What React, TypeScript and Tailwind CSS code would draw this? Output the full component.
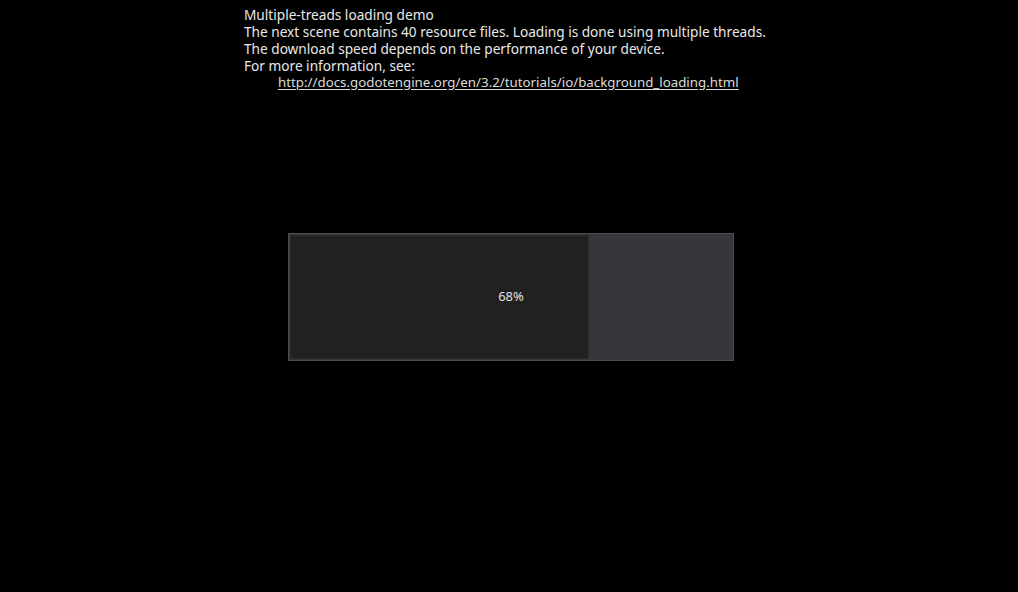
import React from 'react';

const App: React.FC = () => {
  const progress = 68;
  // inner track is 440px wide
  const fillWidth = Math.round((progress / 100) * 440);

  return (
    <div className="w-[1018px] h-[592px] bg-black overflow-hidden" style={{ fontFamily: '"Noto Sans", "Open Sans", sans-serif' }}>
      {/* Info label */}
      <div className="pl-[244px] pt-[6px] text-[13.65px] leading-[17px] text-[#e8e8e8]">
        <div>Multiple-treads loading demo</div>
        <div>The next scene contains 40 resource files. Loading is done using multiple threads.</div>
        <div>The download speed depends on the performance of your device.</div>
        <div>For more information, see:</div>
        <div className="pl-[34px] text-[13.3px]">
          <span className="underline underline-offset-2 text-[#dcdcdc]">http://docs.godotengine.org/en/3.2/tutorials/io/background_loading.html</span>
        </div>
      </div>

      {/* Progress bar */}
      <div className="ml-[288px] mt-[142px] w-[446px] h-[128px] bg-[#38363b] border border-[#4c4b50] p-px relative">
        <div
          className="h-full bg-[#212121] border border-[#2b2b2d]"
          style={{ width: `${fillWidth}px` }}
        />
        <div className="absolute inset-0 flex items-center justify-center text-[13px] text-[#e0e0e0]">
          {progress}%
        </div>
      </div>
    </div>
  );
};

export default App;
